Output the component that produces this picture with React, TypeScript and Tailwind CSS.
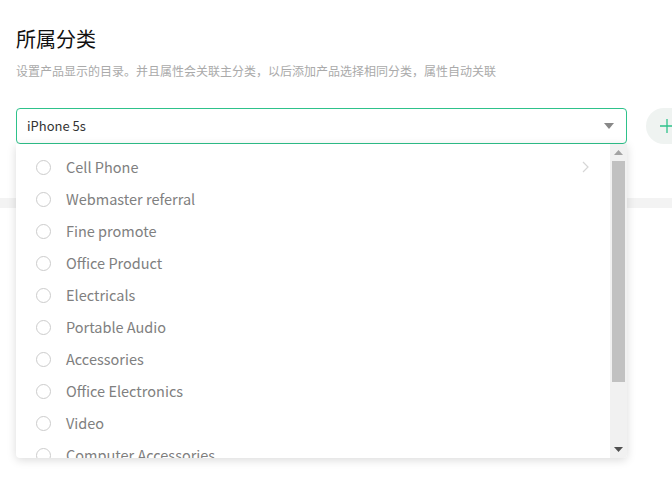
import React from 'react';

const items = [
  'Cell Phone',
  'Webmaster referral',
  'Fine promote',
  'Office Product',
  'Electricals',
  'Portable Audio',
  'Accessories',
  'Office Electronics',
  'Video',
  'Computer Accessories',
];

const font = { fontFamily: '"Noto Sans CJK SC", "Noto Sans", sans-serif' };

export default function App() {
  return (
    <div
      className="relative w-[672px] h-[481px] bg-white overflow-hidden"
      style={font}
    >
      {/* Header */}
      <div className="px-4 pt-[25px]">
        <h2 className="text-[20px] leading-[28px] text-[#111] font-normal">所属分类</h2>
        <p className="mt-[9px] text-[12px] leading-[18px] text-[#aaaaaa]">
          设置产品显示的目录。并且属性会关联主分类，以后添加产品选择相同分类，属性自动关联
        </p>

        {/* Select row */}
        <div className="mt-[28px] flex items-center gap-[19px]">
          <div className="w-[611px] h-[36px] shrink-0 border border-[#2ec28b] rounded-[4px] flex items-center justify-between pl-[10px] pr-[12px]">
            <span className="text-[13px] text-[#333]">iPhone 5s</span>
            <svg width="10" height="6" viewBox="0 0 10 6">
              <path d="M0 0 L10 0 L5 6 Z" fill="#888" />
            </svg>
          </div>
          <div className="w-[40px] h-[36px] shrink-0 rounded-l-full bg-[#eff3f1] flex items-center pl-[14px]">
            <svg width="14" height="14" viewBox="0 0 14 14">
              <path d="M7 0 V14 M0 7 H14" stroke="#2ec28b" strokeWidth="1.3" />
            </svg>
          </div>
        </div>
      </div>

      {/* Content band below */}
      <div className="mt-[54px] h-[10px] bg-[#f3f3f3]" />

      {/* Dropdown popover */}
      <div className="absolute left-[16px] top-[144px] w-[611px] h-[314px] bg-white rounded-b-[4px] shadow-[0_2px_10px_rgba(0,0,0,0.15)] flex overflow-hidden">
        <ul className="flex-1 pt-[7px]">
          {items.map((label, i) => (
            <li key={label} className="h-[32px] flex items-center pl-[20px] pr-[21px]">
              <span className="w-[15px] h-[15px] rounded-full border border-[#cccccc] shrink-0" />
              <span className="ml-[15px] text-[14.5px] text-[#808080] flex-1 whitespace-nowrap">{label}</span>
              {i === 0 && (
                <svg width="7" height="12" viewBox="0 0 7 12">
                  <path d="M1 1 L6 6 L1 11" stroke="#d6d6d6" strokeWidth="1.2" fill="none" />
                </svg>
              )}
            </li>
          ))}
        </ul>
        {/* Scrollbar */}
        <div className="w-[17px] bg-[#f1f1f1] flex flex-col items-center">
          <div className="h-[17px] flex items-center justify-center">
            <svg width="9" height="5" viewBox="0 0 9 5">
              <path d="M0 5 L9 5 L4.5 0 Z" fill="#a3a3a3" />
            </svg>
          </div>
          <div className="w-[13px] h-[221px] bg-[#c1c1c1]" />
          <div className="flex-1" />
          <div className="h-[17px] flex items-center justify-center">
            <svg width="9" height="5" viewBox="0 0 9 5">
              <path d="M0 0 L9 0 L4.5 5 Z" fill="#505050" />
            </svg>
          </div>
        </div>
      </div>
    </div>
  );
}
